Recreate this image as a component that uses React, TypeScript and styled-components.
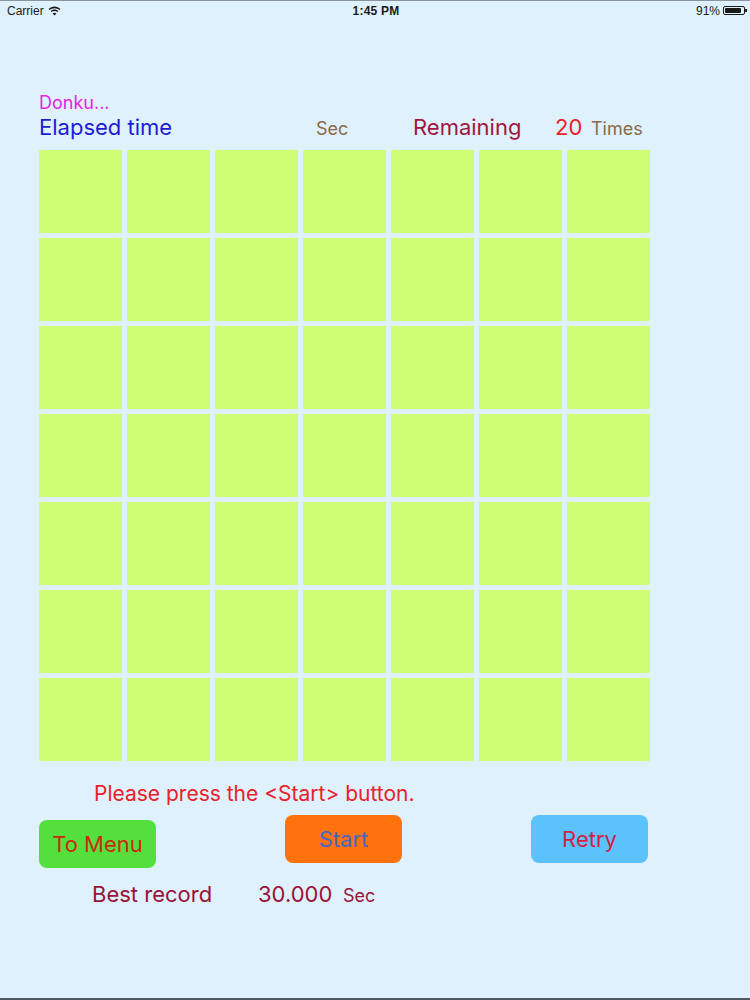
import React from 'react';
import styled, { createGlobalStyle } from 'styled-components';

const BOARD_SIZE = 7;
const TILE_SIZE = 83;
const TILE_GAP = 5;

const GlobalStyle = createGlobalStyle`
    html, body {
        margin: 0;
        padding: 0;
        background: #dff1fc;
    }

    body {
        font-family: Inter, "Liberation Sans", Arial, sans-serif;
    }
`;

const ScreenElement = styled.div`
    width: 750px;
    height: 1000px;
    box-sizing: border-box;
    background: #dff1fc;
    border-top: 1px solid #8a949c;
    border-bottom: 2px solid #4e5a62;
    overflow: hidden;
`;

const StatusBarElement = styled.div`
    display: grid;
    grid-template-columns: 1fr auto 1fr;
    align-items: center;
    height: 19px;
    padding: 0 5px 0 7px;
    font-family: "Liberation Sans", Arial, sans-serif;
    font-size: 12px;
    color: #1a1a1a;
`;

const CarrierElement = styled.div`
    display: flex;
    align-items: center;
    gap: 4px;
`;

const ClockElement = styled.div`
    font-weight: bold;
    letter-spacing: 0.2px;
`;

const BatteryElement = styled.div`
    display: flex;
    align-items: center;
    justify-content: flex-end;
    gap: 3px;
`;

const BatteryBody = styled.div`
    position: relative;
    width: 22px;
    height: 9px;
    border: 1px solid #1a1a1a;
    border-radius: 2px;
    padding: 1px;
    box-sizing: border-box;

    &::before {
        content: '';
        display: block;
        width: 91%;
        height: 100%;
        background: #1a1a1a;
        border-radius: 1px;
    }

    &::after {
        content: '';
        position: absolute;
        right: -3px;
        top: 2px;
        width: 2px;
        height: 3px;
        background: #1a1a1a;
    }
`;

const ContentElement = styled.main`
    padding: 73px 0 0 39px;
`;

const PlayerNameElement = styled.div`
    height: 20px;
    line-height: 20px;
    font-size: 18px;
    color: #e424dc;
`;

const ScoreRowElement = styled.div`
    display: grid;
    grid-template-columns: 277px 97px 142px 36px auto;
    align-items: baseline;
    height: 26px;
    line-height: 26px;
    margin-top: 1px;
`;

interface LabelProps {
    color: string;
    size: number;
}

const LabelElement = styled.span<LabelProps>`
    font-size: ${props => props.size}px;
    color: ${props => props.color};
    white-space: nowrap;
`;

const BoardElement = styled.div`
    display: grid;
    grid-template-columns: repeat(${BOARD_SIZE}, ${TILE_SIZE}px);
    grid-auto-rows: ${TILE_SIZE}px;
    gap: ${TILE_GAP}px;
    margin-top: 10px;
`;

const TileElement = styled.div`
    background: #cdfe74;
`;

const MessageElement = styled.div`
    margin: 21px 0 0 55px;
    height: 24px;
    line-height: 24px;
    font-size: 21px;
    color: #e8202a;
`;

const ButtonRowElement = styled.div`
    display: flex;
    justify-content: space-between;
    align-items: flex-start;
    width: 609px;
    margin-top: 9px;
`;

interface ButtonProps {
    background: string;
    color: string;
    offset?: number;
}

const ButtonElement = styled.button<ButtonProps>`
    width: 117px;
    height: 48px;
    margin-top: ${props => props.offset ?? 0}px;
    border: none;
    border-radius: 8px;
    background: ${props => props.background};
    color: ${props => props.color};
    font-family: Inter, "Liberation Sans", Arial, sans-serif;
    font-size: 22px;
    padding: 0;
    cursor: pointer;
`;

const RecordRowElement = styled.div`
    display: grid;
    grid-template-columns: 166px 85px auto;
    align-items: baseline;
    margin: 13px 0 0 53px;
    height: 26px;
    line-height: 26px;
`;

const WifiIcon = () => (
    <svg width="13" height="10" viewBox="0 0 13 10">
        <path d="M6.5 2.2c1.9 0 3.6.7 4.9 1.9l1-1.1C10.9 1.5 8.8.6 6.5.6S2.1 1.5.6 3l1 1.1c1.3-1.2 3-1.9 4.9-1.9z" fill="#1a1a1a" />
        <path d="M6.5 5c1.1 0 2.1.4 2.9 1.1l1-1.1C9.4 4 8 3.4 6.5 3.4S3.6 4 2.6 5l1 1.1C4.4 5.4 5.4 5 6.5 5z" fill="#1a1a1a" />
        <path d="M6.5 9.6 8.4 7.5c-.5-.5-1.2-.8-1.9-.8s-1.4.3-1.9.8z" fill="#1a1a1a" />
    </svg>
);

const tiles = Array.from({ length: BOARD_SIZE * BOARD_SIZE }, (_, index) => index);

export default function App() {
    return (
        <>
            <GlobalStyle />
            <ScreenElement>
                <StatusBarElement>
                    <CarrierElement>
                        Carrier
                        <WifiIcon />
                    </CarrierElement>
                    <ClockElement>1:45 PM</ClockElement>
                    <BatteryElement>
                        91%
                        <BatteryBody />
                    </BatteryElement>
                </StatusBarElement>

                <ContentElement>
                    <PlayerNameElement>Donku...</PlayerNameElement>
                    <ScoreRowElement>
                        <LabelElement color="#1c1cd6" size={22}>Elapsed time</LabelElement>
                        <LabelElement color="#8a6a4a" size={18}>Sec</LabelElement>
                        <LabelElement color="#a3153c" size={22}>Remaining</LabelElement>
                        <LabelElement color="#e8202a" size={22}>20</LabelElement>
                        <LabelElement color="#8a6a4a" size={18}>Times</LabelElement>
                    </ScoreRowElement>

                    <BoardElement>
                        {tiles.map(index => (
                            <TileElement key={index} />
                        ))}
                    </BoardElement>

                    <MessageElement>Please press the &lt;Start&gt; button.</MessageElement>

                    <ButtonRowElement>
                        <ButtonElement background="#55df3c" color="#cc2a10" offset={5}>To Menu</ButtonElement>
                        <ButtonElement background="#ff720e" color="#4466c4">Start</ButtonElement>
                        <ButtonElement background="#5bc2fb" color="#d42046">Retry</ButtonElement>
                    </ButtonRowElement>

                    <RecordRowElement>
                        <LabelElement color="#9a1238" size={22}>Best record</LabelElement>
                        <LabelElement color="#9a1238" size={22}>30.000</LabelElement>
                        <LabelElement color="#9a1238" size={18}>Sec</LabelElement>
                    </RecordRowElement>
                </ContentElement>
            </ScreenElement>
        </>
    );
}
